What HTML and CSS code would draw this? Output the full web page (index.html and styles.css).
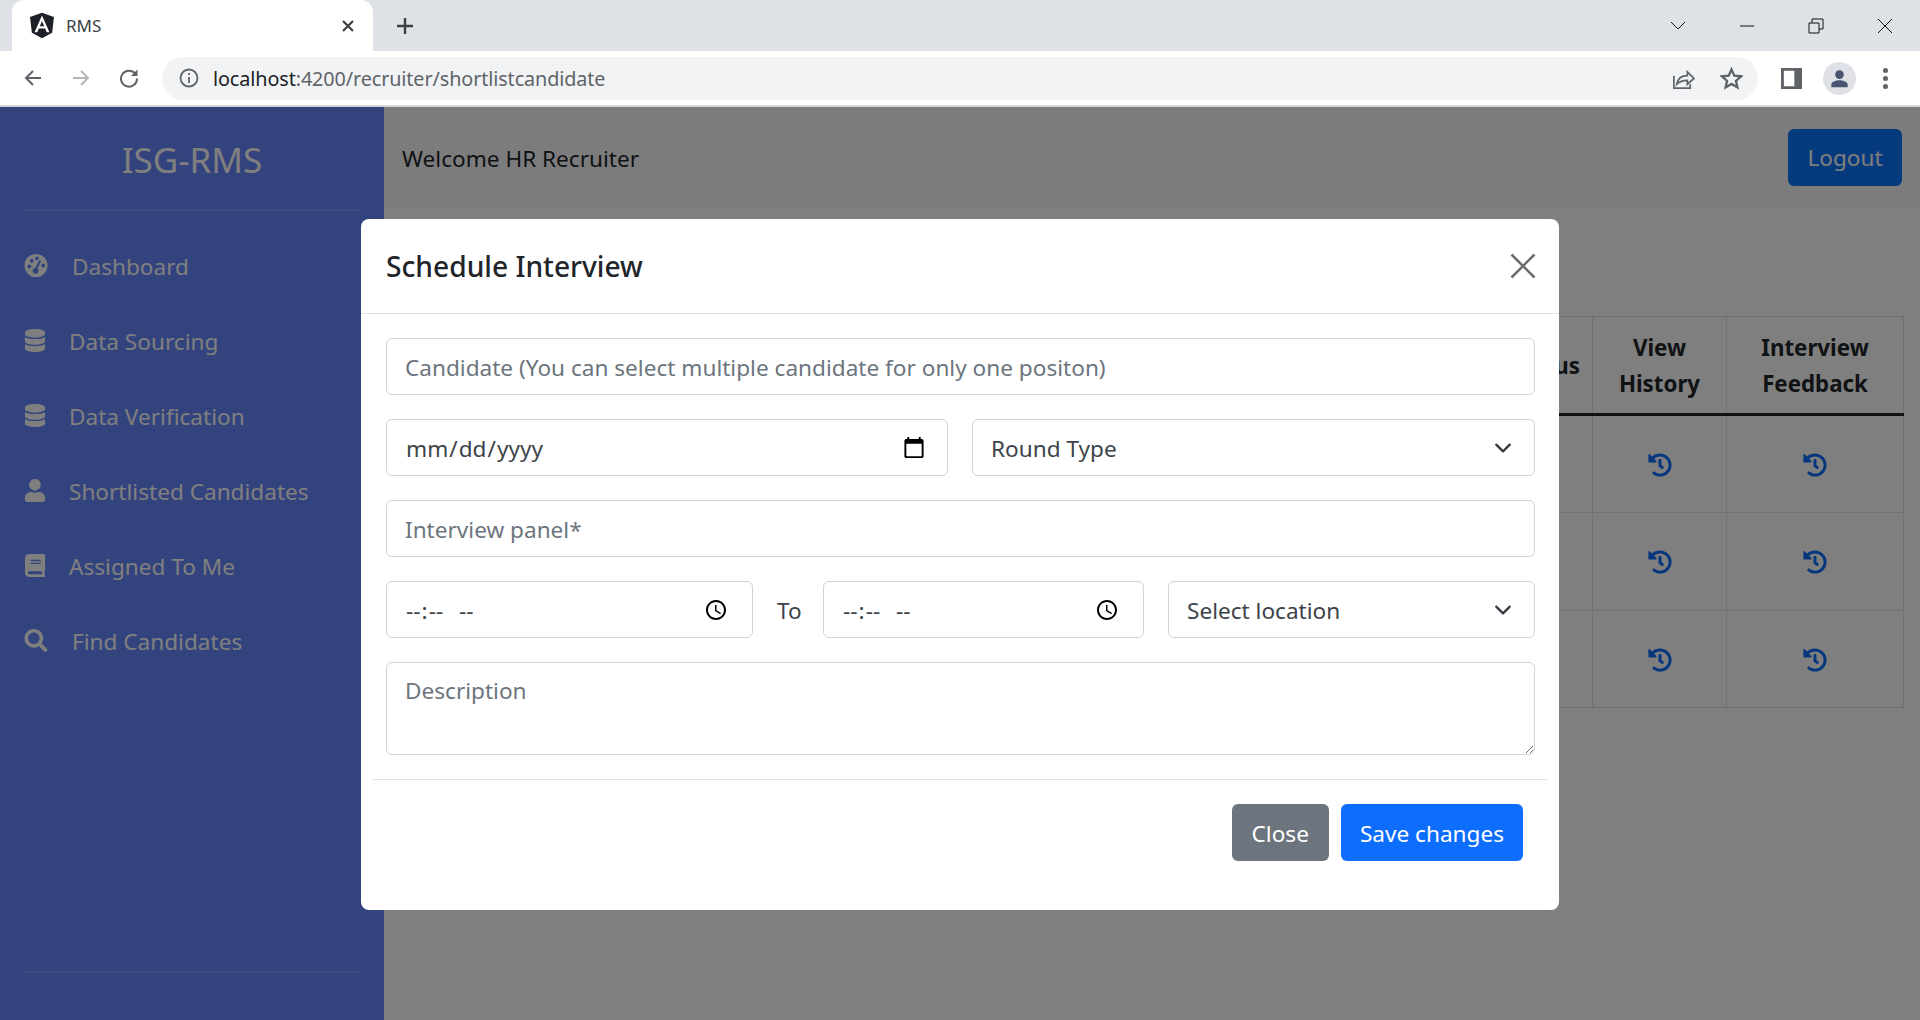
FILE: index.html
```html
<!DOCTYPE html>
<html>
    <head>
        <title>RMS</title>
        <link rel="stylesheet" href="styles.css">
    </head>
    <body>
        <svg class="defs" width="0" height="0">
            <symbol id="i-history" viewBox="0 0 512 512"><path d="M504 255.531c.253 136.64-111.18 248.372-247.82 248.468-59.015.042-113.223-20.53-155.822-54.911-11.077-8.94-11.905-25.541-1.839-35.607l11.267-11.267c8.609-8.609 22.353-9.551 31.891-1.984C173.062 425.135 212.781 440 256 440c101.705 0 184-82.311 184-184 0-101.705-82.311-184-184-184-48.814 0-93.149 18.969-126.068 49.932l50.754 50.754c10.08 10.08 2.941 27.314-11.313 27.314H24c-8.837 0-16-7.163-16-16V38.627c0-14.254 17.234-21.393 27.314-11.314l49.372 49.372C129.209 34.136 189.552 8 256 8c136.81 0 247.747 110.78 248 247.531zm-180.912 78.784l9.823-12.63c8.138-10.463 6.253-25.542-4.21-33.679L288 256.349V152c0-13.255-10.745-24-24-24h-16c-13.255 0-24 10.745-24 24v135.651l65.409 50.874c10.463 8.137 25.541 6.253 33.679-4.21z"/></symbol>
            <symbol id="i-database" viewBox="0 0 448 512"><path d="M448 73.143v45.714C448 159.143 347.667 192 224 192S0 159.143 0 118.857V73.143C0 32.857 100.333 0 224 0s224 32.857 224 73.143zM448 176v102.857C448 319.143 347.667 352 224 352S0 319.143 0 278.857V176c48.125 33.143 136.208 48.572 224 48.572S399.874 209.143 448 176zm0 160v102.857C448 479.143 347.667 512 224 512S0 479.143 0 438.857V336c48.125 33.143 136.208 48.572 224 48.572S399.874 369.143 448 336z"/></symbol>
        </svg>

        <div class="tabstrip">
            <div class="tab">
                <svg class="tab-logo" viewBox="25 25 200 210"><polygon fill="#1d2027" points="125,30 31.9,63.2 46.1,186.3 125,230 203.9,186.3 218.1,63.2"/><path fill="#fff" d="M125,52.1L66.8,182.6h21.7l11.7-29.2h49.4l11.7,29.2h21.7L125,52.1z M142,135.4H108l17-40.9L142,135.4z"/></svg>
                <span class="tab-title">RMS</span>
                <svg class="tab-close" viewBox="0 0 14 14"><path d="M2 2l10 10M12 2L2 12"/></svg>
            </div>
            <svg class="new-tab" viewBox="0 0 18 18"><path d="M9 1v16M1 9h16"/></svg>
            <div class="window-controls">
                <svg viewBox="0 0 16 10"><path d="M1 1l7 7 7-7"/></svg>
                <svg viewBox="0 0 16 10"><path d="M1 5h14"/></svg>
                <svg viewBox="0 0 16 16"><path d="M1 5h10v10H1zM4 5V1h11v10h-4"/></svg>
                <svg viewBox="0 0 16 16"><path d="M1 1l14 14M15 1L1 15"/></svg>
            </div>
        </div>

        <div class="toolbar">
            <svg class="nav-icon" viewBox="0 0 20 20"><path d="M18 10H3M10 3l-7 7 7 7"/></svg>
            <svg class="nav-icon off" viewBox="0 0 20 20"><path d="M2 10h15M10 3l7 7-7 7"/></svg>
            <svg class="nav-icon" viewBox="0 0 20 20"><path d="M16.5 6A8 8 0 1 0 18 10.500"/><path class="solid" d="M18.500 1.500v6.500h-6.500z"/></svg>
            <div class="omnibox">
                <svg class="info" viewBox="0 0 20 20"><circle cx="10" cy="10" r="8.500"/><path d="M10 9v6M10 5v2"/></svg>
                <span class="url"><b>localhost</b>:4200/recruiter/shortlistcandidate</span>
                <svg class="omni-icon share" viewBox="0 0 24 24"><path d="M2 9v13h17v-4M5 18c1-6 5-9 11-9V5l7 7-7 6v-4c-5 0-8 1-11 4z"/></svg>
                <svg class="omni-icon star" viewBox="0 0 24 24"><path d="M12 2.500l2.900 6.500 7.100.7-5.400 4.700 1.600 7-6.200-3.700-6.200 3.700 1.600-7L2 9.700l7.100-.7z"/></svg>
            </div>
            <svg class="side-panel" viewBox="0 0 22 22"><path fill-rule="evenodd" d="M0 0h22v22H0zM3 3v16h11V3z"/></svg>
            <div class="avatar"><svg viewBox="0 0 22 22"><circle cx="11" cy="6.500" r="5"/><path d="M1.500 21v-3c0-3 5-5 9.500-5s9.500 2 9.500 5v3z"/></svg></div>
            <div class="menu-dots"><i></i><i></i><i></i></div>
        </div>

        <div class="app">
            <aside class="sidebar">
                <div class="brand">ISG-RMS</div>
                <nav class="side-nav">
                    <a class="side-link wide">
                        <svg class="side-icon" viewBox="0 0 24 24"><circle cx="12" cy="12" r="12"/><g class="cut"><circle cx="5" cy="13" r="2"/><circle cx="7.500" cy="7" r="2"/><circle cx="13" cy="4.500" r="2"/><circle cx="19.500" cy="12" r="2"/><circle cx="11.500" cy="17.500" r="3"/><path d="M10.500 16l5-9.500 2 1-5 9.500z"/></g></svg>
                        <span>Dashboard</span>
                    </a>
                    <a class="side-link"><svg class="side-icon"><use href="#i-database"/></svg><span>Data Sourcing</span></a>
                    <a class="side-link"><svg class="side-icon"><use href="#i-database"/></svg><span>Data Verification</span></a>
                    <a class="side-link">
                        <svg class="side-icon" viewBox="0 0 448 512"><path d="M224 256c70.700 0 128-57.300 128-128S294.700 0 224 0 96 57.300 96 128s57.300 128 128 128zm89.600 32h-16.700c-22.200 10.200-46.900 16-72.900 16s-50.600-5.800-72.900-16h-16.700C60.200 288 0 348.200 0 422.400V464c0 26.500 21.500 48 48 48h352c26.500 0 48-21.500 48-48v-41.600c0-74.200-60.200-134.400-134.400-134.400z"/></svg>
                        <span>Shortlisted Candidates</span>
                    </a>
                    <a class="side-link">
                        <svg class="side-icon" viewBox="0 0 448 512"><path d="M448 360V24c0-13.300-10.700-24-24-24H96C43 0 0 43 0 96v320c0 53 43 96 96 96h328c13.300 0 24-10.700 24-24v-16c0-7.500-3.500-14.300-8.900-18.700-4.200-15.400-4.200-59.300 0-74.700 5.400-4.300 8.900-11.100 8.900-18.600zM128 134c0-3.300 2.700-6 6-6h212c3.300 0 6 2.700 6 6v20c0 3.300-2.700 6-6 6H134c-3.300 0-6-2.700-6-6v-20zm0 64c0-3.300 2.700-6 6-6h212c3.300 0 6 2.700 6 6v20c0 3.300-2.700 6-6 6H134c-3.300 0-6-2.700-6-6v-20zm253.400 250H96c-17.700 0-32-14.300-32-32 0-17.600 14.400-32 32-32h285.400c-1.900 17.100-1.900 46.900 0 64z"/></svg>
                        <span>Assigned To Me</span>
                    </a>
                    <a class="side-link wide">
                        <svg class="side-icon" viewBox="0 0 512 512"><path d="M505 442.700L405.300 343c-4.500-4.500-10.600-7-17-7H372c27.600-35.300 44-79.700 44-128C416 93.100 322.900 0 208 0S0 93.100 0 208s93.100 208 208 208c48.300 0 92.700-16.400 128-44v16.300c0 6.400 2.500 12.500 7 17l99.700 99.700c9.400 9.400 24.600 9.400 33.900 0l28.300-28.300c9.400-9.400 9.400-24.600.1-34zM208 336c-70.700 0-128-57.200-128-128 0-70.700 57.200-128 128-128 70.700 0 128 57.200 128 128 0 70.700-57.200 128-128 128z"/></svg>
                        <span>Find Candidates</span>
                    </a>
                </nav>
                <div class="side-foot"></div>
            </aside>
            <main class="content">
                <header class="topbar">
                    <span class="welcome">Welcome HR Recruiter</span>
                    <button class="btn btn-logout">Logout</button>
                </header>
                <table class="data-table">
                    <thead>
                        <tr><th></th><th>Status</th><th>View<br>History</th><th>Interview<br>Feedback</th></tr>
                    </thead>
                    <tbody>
                        <tr><td></td><td></td><td><svg class="hist"><use href="#i-history"/></svg></td><td><svg class="hist"><use href="#i-history"/></svg></td></tr>
                        <tr><td></td><td></td><td><svg class="hist"><use href="#i-history"/></svg></td><td><svg class="hist"><use href="#i-history"/></svg></td></tr>
                        <tr><td></td><td></td><td><svg class="hist"><use href="#i-history"/></svg></td><td><svg class="hist"><use href="#i-history"/></svg></td></tr>
                    </tbody>
                </table>
            </main>
        </div>

        <div class="backdrop">
            <form class="modal">
                <div class="modal-head">
                    <h5>Schedule Interview</h5>
                    <svg class="modal-x" viewBox="0 0 26 26"><path d="M1.500 1.500l23 23M24.500 1.500l-23 23"/></svg>
                </div>
                <div class="modal-body">
                    <input class="field" type="text" placeholder="Candidate (You can select multiple candidate for only one positon)">
                    <div class="row-half">
                        <input class="field" type="date">
                        <select class="field"><option>Round Type</option></select>
                    </div>
                    <input class="field" type="text" placeholder="Interview panel*">
                    <div class="row-time">
                        <input class="field" type="time">
                        <span class="to">To</span>
                        <input class="field" type="time">
                        <select class="field"><option>Select location</option></select>
                    </div>
                    <textarea class="field area" placeholder="Description"></textarea>
                </div>
                <div class="modal-foot">
                    <button type="button" class="btn btn-grey">Close</button>
                    <button type="button" class="btn btn-blue">Save changes</button>
                </div>
            </form>
        </div>
    </body>
</html>
```

FILE: styles.css
```css
* {
    box-sizing: border-box;
}
html, body {
    margin: 0;
    height: 1020px;
    overflow: hidden;
}
body {
    position: relative;
    font-family: "Noto Sans", "Open Sans", sans-serif;
    font-size: 22.6px;
    color: #212529;
    background-color: #fff;
}
.defs {
    position: absolute;
}

/* browser chrome */
.tabstrip {
    display: flex;
    align-items: center;
    height: 51px;
    background-color: #dee1e6;
}
.tab {
    display: flex;
    align-items: center;
    width: 361px;
    height: 51px;
    margin-left: 12px;
    padding: 0 10px 0 17px;
    background-color: #fff;
    border-radius: 12px 12px 0 0;
}
.tab-logo {
    width: 26px;
    height: 27px;
}
.tab-title {
    margin-left: 11px;
    font-size: 17px;
    color: #3c4043;
}
.tab-close {
    width: 14px;
    height: 14px;
    margin-left: auto;
    margin-right: 8px;
    fill: none;
    stroke: #3c4043;
    stroke-width: 2.200;
}
.new-tab {
    width: 18px;
    height: 18px;
    margin-left: 23px;
    fill: none;
    stroke: #3c4043;
    stroke-width: 2.400;
}
.window-controls {
    display: flex;
    align-items: center;
    gap: 53px;
    margin-left: auto;
    margin-right: 27px;
}
.window-controls svg {
    width: 16px;
    height: 16px;
    fill: none;
    stroke: #111;
    stroke-width: 1;
}
.toolbar {
    display: flex;
    align-items: center;
    height: 56px;
    padding-left: 23px;
    background-color: #fff;
    border-bottom: 2px solid #d6d6d6;
}
.nav-icon {
    width: 20px;
    height: 20px;
    margin-right: 28px;
    fill: none;
    stroke: #5f6368;
    stroke-width: 2;
}
.nav-icon.off {
    stroke: #b4b6b9;
}
.nav-icon .solid {
    fill: #5f6368;
    stroke: none;
}
.omnibox {
    display: flex;
    align-items: center;
    width: 1596px;
    height: 43px;
    margin-left: -5px;
    padding: 0 15px 0 17px;
    background-color: #f1f3f4;
    border-radius: 22px;
}
.info {
    width: 20px;
    height: 20px;
    fill: none;
    stroke: #5f6368;
    stroke-width: 1.800;
}
.url {
    margin-left: 14px;
    font-size: 19.800px;
    letter-spacing: -0.100px;
    color: #5f6368;
}
.url b {
    font-weight: 400;
    color: #202124;
}
.omni-icon {
    width: 23px;
    height: 23px;
    fill: none;
    stroke: #5f6368;
    stroke-width: 1.800;
}
.share {
    margin-left: auto;
}
.star {
    margin-left: 25px;
    stroke-width: 2.400;
}
.side-panel {
    width: 21px;
    height: 21px;
    margin-left: 23px;
    fill: #5f6368;
}
.avatar {
    display: flex;
    align-items: center;
    justify-content: center;
    width: 33px;
    height: 33px;
    margin-left: 21px;
    background-color: #dfe1e7;
    border-radius: 50%;
}
.avatar svg {
    width: 19px;
    height: 19px;
    fill: #4a5571;
}
.menu-dots {
    display: flex;
    flex-direction: column;
    gap: 3px;
    margin-left: 27px;
}
.menu-dots i {
    width: 5px;
    height: 5px;
    background-color: #5f6368;
    border-radius: 50%;
}

/* the app under the dialog */
.app {
    display: flex;
    height: 913px;
}
.sidebar {
    display: flex;
    flex-direction: column;
    flex: none;
    width: 384px;
    padding: 0 24px;
    background-color: #6686fa;
    color: #fff;
}
.brand {
    height: 104px;
    padding-top: 29px;
    border-bottom: 2px solid rgba(255, 255, 255, 0.15);
    text-align: center;
    font-size: 35px;
}
.side-nav {
    display: flex;
    flex-direction: column;
    padding-top: 17px;
}
.side-link {
    display: flex;
    align-items: center;
    gap: 23px;
    height: 75px;
}
.side-link span {
    padding-top: 1px;
}
.side-link.wide {
    gap: 24px;
}
.side-icon {
    flex: none;
    width: 22px;
    height: 23px;
    fill: #fff;
}
.side-link.wide .side-icon {
    width: 24px;
}
.side-icon .cut {
    fill: #6686fa;
}
.side-foot {
    margin-top: auto;
    margin-bottom: 47px;
    border-top: 2px solid rgba(255, 255, 255, 0.15);
}
.content {
    display: flex;
    flex-direction: column;
    flex: 1;
}
.topbar {
    display: flex;
    align-items: center;
    justify-content: space-between;
    height: 100px;
    padding: 0 18px;
    background-color: #f8f9fa;
}
.welcome {
    padding-top: 2px;
}
.btn {
    height: 57px;
    padding: 1px 18px 0;
    border: 1px solid transparent;
    border-radius: 6px;
    font-family: inherit;
    font-size: 22.6px;
    color: #fff;
}
.btn-logout {
    width: 114px;
    padding: 1px 0 0;
    background-color: #0b74fb;
}
.data-table {
    align-self: flex-end;
    width: 540px;
    margin: 109px 16px 0 0;
    border-collapse: collapse;
    table-layout: fixed;
}
.data-table th, .data-table td {
    border: 1px solid #dee2e6;
    text-align: center;
}
.data-table th {
    height: 98px;
    padding-top: 2px;
    border-bottom: 3px solid #212529;
    font-size: 22.300px;
    line-height: 36px;
}
.data-table th:first-child {
    width: 132px;
}
.data-table th:nth-child(2) {
    width: 96px;
}
.data-table th:nth-child(3) {
    width: 134px;
}
.data-table td {
    height: 98px;
}
.data-table tr:last-child td {
    height: 97px;
}
.hist {
    display: block;
    width: 24px;
    height: 24px;
    margin: 1px auto 0;
    fill: #0d6efd;
}

/* dialog */
.backdrop {
    position: absolute;
    top: 107px;
    left: 0;
    right: 0;
    bottom: 0;
    padding: 112px 0 0 361px;
    background-color: rgba(0, 0, 0, 0.5);
}
.modal {
    display: flex;
    flex-direction: column;
    width: 1198px;
    height: 691px;
    background-color: #fff;
    border-radius: 8px;
}
.modal-head {
    display: flex;
    align-items: center;
    justify-content: space-between;
    flex: none;
    height: 95px;
    padding: 0 23px 0 25px;
    border-bottom: 1px solid #dee2e6;
}
.modal-head h5 {
    margin: 0;
    font-size: 28.200px;
    font-weight: 500;
}
.modal-x {
    width: 26px;
    height: 26px;
    fill: none;
    stroke: #6c6f72;
    stroke-width: 2.600;
}
.modal-body {
    display: flex;
    flex-direction: column;
    gap: 24px;
    padding: 24px 24px 24px 25px;
}
.row-half {
    display: grid;
    grid-template-columns: 562px 1fr;
    gap: 24px;
}
.row-time {
    display: grid;
    grid-template-columns: 367px 22px 321px 1fr;
    gap: 24px;
    align-items: center;
}
.to {
    padding-top: 1px;
    white-space: nowrap;
    color: #3d4349;
}
.field {
    display: block;
    width: 100%;
    height: 57px;
    padding: 1px 18px 0;
    border: 1px solid #ced4da;
    border-radius: 6px;
    background-color: #fff;
    font-family: inherit;
    font-size: 22.6px;
    color: #3d4349;
    outline: none;
}
.field::placeholder {
    color: #6c757d;
}
.field::-webkit-calendar-picker-indicator {
    width: 24px;
    height: 24px;
    margin: 0 3px 0 0;
    padding: 0;
}
input[type=time] {
    letter-spacing: 1.500px;
}
input[type=time]::-webkit-calendar-picker-indicator {
    margin-right: 6px;
}
input[type=time]::-webkit-datetime-edit-ampm-field {
    margin-left: 10px;
}
select.field {
    appearance: none;
    background-image: url("data:image/svg+xml,%3csvg xmlns='http://www.w3.org/2000/svg' viewBox='0 0 16 16'%3e%3cpath fill='none' stroke='%23343a40' stroke-linecap='round' stroke-linejoin='round' stroke-width='2' d='M2 5l6 6 6-6'/%3e%3c/svg%3e");
    background-repeat: no-repeat;
    background-position: right 19px center;
    background-size: 24px 18px;
}
.area {
    height: 93px;
    padding-top: 12px;
    resize: vertical;
}
.modal-foot {
    display: flex;
    justify-content: flex-end;
    gap: 12px;
    margin: 0 12px;
    padding: 24px 24px 0 0;
    border-top: 1px solid #dee2e6;
}
.btn-grey {
    padding: 1px 19px 0;
    background-color: #6c757d;
}
.btn-blue {
    background-color: #0d6efd;
}
```
